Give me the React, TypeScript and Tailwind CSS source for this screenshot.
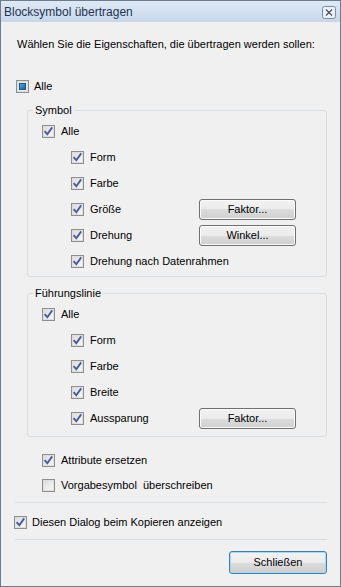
import React from "react";

type CheckState = "checked" | "unchecked" | "mixed";

const FONT = "[font-family:'Liberation_Sans',Arial,sans-serif]";

function CheckBox({ state }: { state: CheckState }) {
  return (
    <svg width="13" height="13" viewBox="0 0 13 13" className="shrink-0">
      <defs>
        <linearGradient id="cbFill" x1="0" y1="0" x2="1" y2="1">
          <stop offset="0" stopColor="#dcdcdc" />
          <stop offset="1" stopColor="#f8f8f8" />
        </linearGradient>
        <linearGradient id="cbMixed" x1="0" y1="0" x2="1" y2="1">
          <stop offset="0" stopColor="#62b6e8" />
          <stop offset="0.5" stopColor="#2a86c6" />
          <stop offset="1" stopColor="#1b5e98" />
        </linearGradient>
      </defs>
      <rect x="0.5" y="0.5" width="12" height="12" fill="#f4f4f4" stroke="#8f8f8f" />
      <rect x="1.5" y="1.5" width="10" height="10" fill="url(#cbFill)" stroke="#dedede" />
      {state === "checked" && (
        <path
          d="M2.6 6.2 L5.3 9.2 L10.2 2.4"
          fill="none"
          stroke="#4b5d99"
          strokeWidth="1.9"
          strokeLinejoin="miter"
        />
      )}
      {state === "mixed" && (
        <rect x="3.5" y="3.5" width="6" height="6" fill="url(#cbMixed)" stroke="#1f5685" />
      )}
    </svg>
  );
}

function WinButton({
  children,
  width,
  isDefault,
}: {
  children: React.ReactNode;
  width: string;
  isDefault?: boolean;
}) {
  return (
    <button
      className={
        isDefault
          ? `${width} h-[23px] rounded-[3px] border border-[#3c7fb1] bg-[linear-gradient(to_bottom,#f2f2f2_0%,#ebebeb_50%,#dddddd_50%,#cfcfcf_100%)] text-[11px] leading-[13px] text-black shadow-[inset_0_0_0_1px_#a9d8f2]`
          : `${width} h-[21px] rounded-[3px] border border-[#707070] bg-[linear-gradient(to_bottom,#f2f2f2_0%,#ebebeb_50%,#dddddd_50%,#cfcfcf_100%)] text-[11px] leading-[13px] text-black shadow-[inset_0_0_0_1px_#fbfbfb]`
      }
    >
      {children}
    </button>
  );
}

function Row({
  state,
  label,
  pad,
  button,
  h = "h-[26px]",
}: {
  state: CheckState;
  label: string;
  pad: string;
  button?: string;
  h?: string;
}) {
  return (
    <div className={`flex items-center ${h} ${pad}`}>
      <CheckBox state={state} />
      <span className={`ml-[6px] whitespace-pre leading-[13px] ${button ? "w-[109px]" : ""}`}>
        {label}
      </span>
      {button && <WinButton width="w-[97px]">{button}</WinButton>}
    </div>
  );
}

function Group({
  title,
  rows,
  pb,
}: {
  title: string;
  rows: { label: string; button?: string }[];
  pb: string;
}) {
  return (
    <fieldset className={`ml-[26px] w-[300px] rounded-[3px] border border-[#d5dfe5] pt-[1px] ${pb}`}>
      <legend className="ml-[5px] px-[2px] leading-[13px]">{title}</legend>
      <Row state="checked" label="Alle" pad="pl-[14px]" />
      {rows.map((r) => (
        <Row key={r.label} state="checked" label={r.label} button={r.button} pad="pl-[43px]" />
      ))}
    </fieldset>
  );
}

export default function App() {
  return (
    <div
      className={`${FONT} flex h-[587px] w-[341px] flex-col border border-[#6e7d8e] bg-[#f0f0f0] text-[11px] text-black`}
    >
      <div className="flex h-[21px] shrink-0 items-center bg-[linear-gradient(to_bottom,#dfe9f5,#c7d7ea)] pl-[3px] pr-[4px]">
        <span className="text-[12px] leading-[14px] text-[#1f3450]">Blocksymbol übertragen</span>
        <svg width="14" height="13" viewBox="0 0 14 13" className="ml-auto mt-[1px]">
          <rect x="0.5" y="0.5" width="13" height="12" rx="2" fill="#e9eff7" stroke="#7d8ca0" />
          <path d="M4 3.5 L10 9.5 M10 3.5 L4 9.5" stroke="#ffffff" strokeWidth="3.2" />
          <path d="M4 3.5 L10 9.5 M10 3.5 L4 9.5" stroke="#4d5560" strokeWidth="1.5" />
        </svg>
      </div>

      <p className="ml-[16px] mt-[16px] leading-[13px]">
        Wählen Sie die Eigenschaften, die übertragen werden sollen:
      </p>

      <div className="ml-[15px] mt-[29px] flex h-[13px] items-center">
        <CheckBox state="mixed" />
        <span className="ml-[5px] leading-[13px]">Alle</span>
      </div>

      <div className="mt-[11px]">
        <Group
          title="Symbol"
          pb="pb-[2px]"
          rows={[
            { label: "Form" },
            { label: "Farbe" },
            { label: "Größe", button: "Faktor..." },
            { label: "Drehung", button: "Winkel..." },
            { label: "Drehung nach Datenrahmen" },
          ]}
        />
      </div>

      <div className="mt-[10px]">
        <Group
          title="Führungslinie"
          pb="pb-[5px]"
          rows={[
            { label: "Form" },
            { label: "Farbe" },
            { label: "Breite" },
            { label: "Aussparung", button: "Faktor..." },
          ]}
        />
      </div>

      <div className="mt-[10px]">
        <Row state="checked" label="Attribute ersetzen" pad="pl-[41px]" h="h-[26px]" />
        <Row state="unchecked" label="Vorgabesymbol  überschreiben" pad="pl-[41px]" h="h-[25px]" />
      </div>

      <div className="ml-[14px] mt-[4px] h-px w-[312px] bg-[#d5dfe5]" />

      <div className="ml-[13px] mt-[13px] flex h-[13px] items-center">
        <CheckBox state="checked" />
        <span className="ml-[5px] leading-[13px]">Diesen Dialog beim Kopieren anzeigen</span>
      </div>

      <div className="ml-[14px] mt-[10px] h-px w-[312px] bg-[#d5dfe5]" />

      <div className="mr-[13px] mt-[11px] flex justify-end">
        <WinButton width="w-[98px]" isDefault>
          Schließen
        </WinButton>
      </div>
    </div>
  );
}
